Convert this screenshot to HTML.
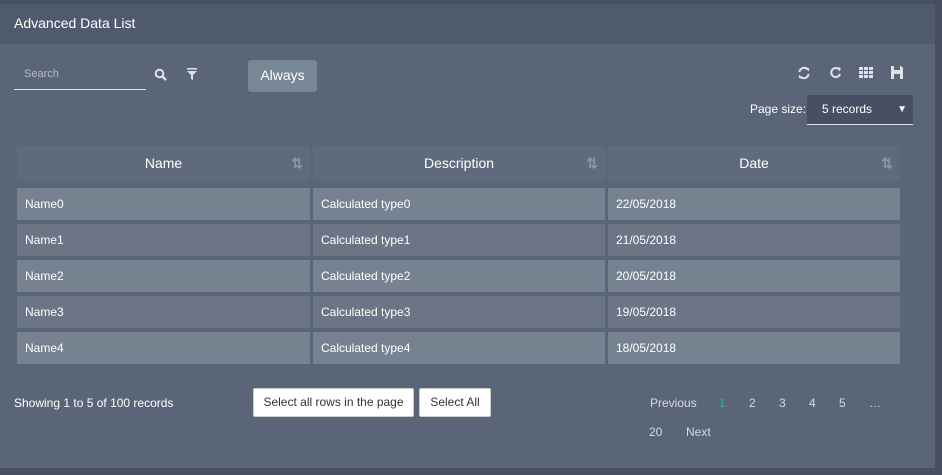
<!DOCTYPE html>
<html><head><style>
*{margin:0;padding:0;box-sizing:border-box}
body{width:942px;height:475px;background:#465062;font-family:"Liberation Sans",sans-serif;color:#fff;position:relative;overflow:hidden;font-size:12px}
.panel{position:absolute;left:0;top:4px;width:935px;height:464px;background:#5a6577}
.hdr{position:absolute;left:0;top:0;width:935px;height:40px;background:#4f5a6c;font-size:14px;line-height:38px;padding-left:14px}
.abs{position:absolute}
.cell{position:absolute;height:32px;line-height:32px;padding-left:8px;font-size:12px}
.th{position:absolute;top:142px;height:35px;line-height:35px;background:#5f6a7c;text-align:center;font-size:14px}
.sort{position:absolute;right:7px;top:0;color:#8a95a4;font-size:14px;font-weight:bold}
.btn{position:absolute;top:384px;height:29px;line-height:27px;background:#fff;color:#333;border:1px solid #ccc;border-radius:2px;font-size:12px;text-align:center}
.pg{position:absolute;font-size:12px;color:#d6dbe2}
</style></head><body>
<div class="panel">
<div class="hdr">Advanced Data List</div>
<div class="abs" style="left:24px;top:64px;font-size:11px;color:#b3bac5">Search</div>
<div class="abs" style="left:14px;top:85px;width:132px;height:1px;background:#e0e4ea"></div>
<svg class="abs" style="left:154px;top:64px" width="14" height="14" viewBox="0 0 14 14"><circle cx="5.5" cy="5.5" r="3.8" fill="none" stroke="#dfe3e8" stroke-width="2"/><path d="M8.3 8.3L12 12" stroke="#dfe3e8" stroke-width="2.4"/></svg>
<svg class="abs" style="left:186px;top:64px" width="12" height="13" viewBox="0 0 12 13"><rect x="1" y="0" width="10" height="1.5" fill="#dfe3e8"/><path d="M1 3H11L7 7V12L5 11V7Z" fill="#dfe3e8"/></svg>
<div class="abs" style="left:248px;top:56px;width:69px;height:32px;background:#778794;border-radius:3px;line-height:31px;text-align:center;font-size:14px">Always</div>
<svg class="abs" style="left:797px;top:62px" width="14" height="14" viewBox="0 0 14 14"><path d="M2.5 6A4.5 4.5 0 0 1 10.5 3.5M11.5 8A4.5 4.5 0 0 1 3.5 10.5" fill="none" stroke="#dfe3e8" stroke-width="2"/><path d="M9 1L12.5 2.5L11.5 5.5Z M5 13L1.5 11.5L2.5 8.5Z" fill="#dfe3e8"/></svg>
<svg class="abs" style="left:829px;top:62px" width="14" height="14" viewBox="0 0 14 14"><path d="M11 8A4.5 4.5 0 1 1 9.5 3" fill="none" stroke="#dfe3e8" stroke-width="2"/><path d="M8 1L12 2L10.5 5.5Z" fill="#dfe3e8"/></svg>
<svg class="abs" style="left:859px;top:63px" width="14" height="12" viewBox="0 0 14 12"><g fill="#dfe3e8"><rect x="0" y="0" width="4" height="3"/><rect x="5" y="0" width="4" height="3"/><rect x="10" y="0" width="4" height="3"/><rect x="0" y="4" width="4" height="3"/><rect x="5" y="4" width="4" height="3"/><rect x="10" y="4" width="4" height="3"/><rect x="0" y="8" width="4" height="3"/><rect x="5" y="8" width="4" height="3"/><rect x="10" y="8" width="4" height="3"/></g></svg>
<svg class="abs" style="left:891px;top:62px" width="12" height="13" viewBox="0 0 12 13"><path d="M0 0H10L12 2V13H0Z" fill="#dfe3e8"/><rect x="3" y="0" width="6" height="4" fill="#5a6577"/><rect x="3" y="8" width="6" height="5" fill="#5a6577"/></svg>
<div class="abs" style="left:750px;top:98px;font-size:12px">Page size:</div>
<div class="abs" style="left:807px;top:91px;width:106px;height:30px;background:#465062;border-bottom:1px solid #e0e4ea;line-height:29px;padding-left:15px;font-size:12px">5 records<span style="position:absolute;right:6px;font-size:10px">▼</span></div>

<div class="th" style="left:17px;width:293px">Name<span class="sort">⇅</span></div>
<div class="th" style="left:313px;width:292px">Description<span class="sort">⇅</span></div>
<div class="th" style="left:608px;width:292px">Date<span class="sort">⇅</span></div>

<div class="cell" style="left:17px;top:184px;width:293px;background:#778291">Name0</div>
<div class="cell" style="left:313px;top:184px;width:292px;background:#778291">Calculated type0</div>
<div class="cell" style="left:608px;top:184px;width:292px;background:#778291">22/05/2018</div>
<div class="cell" style="left:17px;top:220px;width:293px;background:#6b7585">Name1</div>
<div class="cell" style="left:313px;top:220px;width:292px;background:#6b7585">Calculated type1</div>
<div class="cell" style="left:608px;top:220px;width:292px;background:#6b7585">21/05/2018</div>
<div class="cell" style="left:17px;top:256px;width:293px;background:#778291">Name2</div>
<div class="cell" style="left:313px;top:256px;width:292px;background:#778291">Calculated type2</div>
<div class="cell" style="left:608px;top:256px;width:292px;background:#778291">20/05/2018</div>
<div class="cell" style="left:17px;top:292px;width:293px;background:#6b7585">Name3</div>
<div class="cell" style="left:313px;top:292px;width:292px;background:#6b7585">Calculated type3</div>
<div class="cell" style="left:608px;top:292px;width:292px;background:#6b7585">19/05/2018</div>
<div class="cell" style="left:17px;top:328px;width:293px;background:#778291">Name4</div>
<div class="cell" style="left:313px;top:328px;width:292px;background:#778291">Calculated type4</div>
<div class="cell" style="left:608px;top:328px;width:292px;background:#778291">18/05/2018</div>

<div class="abs" style="left:14px;top:392px;font-size:12px">Showing 1 to 5 of 100 records</div>
<div class="btn" style="left:253px;width:161px">Select all rows in the page</div>
<div class="btn" style="left:419px;width:72px">Select All</div>
<div class="pg" style="left:650px;top:392px">Previous</div>
<div class="pg" style="left:719px;top:392px;color:#3aa88a">1</div>
<div class="pg" style="left:749px;top:392px">2</div>
<div class="pg" style="left:779px;top:392px">3</div>
<div class="pg" style="left:809px;top:392px">4</div>
<div class="pg" style="left:839px;top:392px">5</div>
<div class="pg" style="left:869px;top:392px">…</div>
<div class="pg" style="left:649px;top:421px">20</div>
<div class="pg" style="left:686px;top:421px">Next</div>
</div>
</body></html>
